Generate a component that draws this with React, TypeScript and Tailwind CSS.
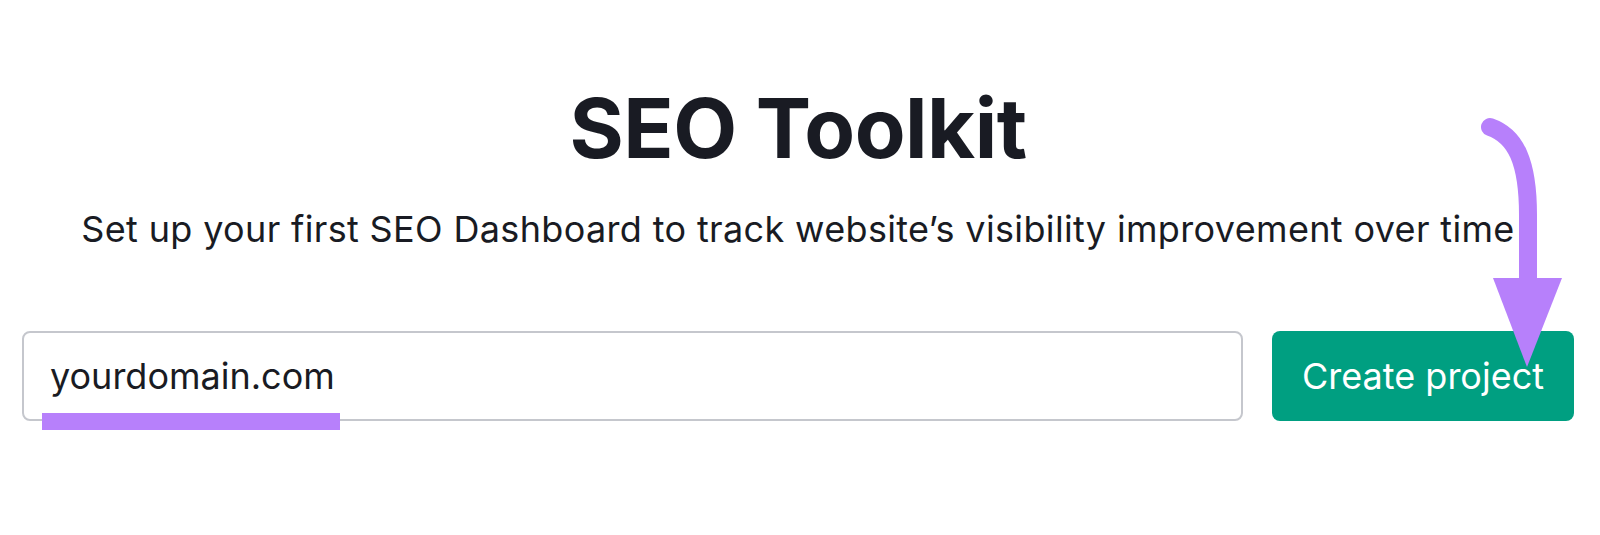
import React from 'react'

function Arrow() {
  return (
    <svg className="absolute left-[1470px] top-[110px] pointer-events-none" width="110" height="270" viewBox="0 0 110 270">
      <path d="M20 17 C46 26 58 52 58 105 L58 176" fill="none" stroke="#b780fb" strokeWidth="18" strokeLinecap="round" />
      <path d="M23 168 L92 168 L57 257 Z" fill="#b780fb" />
    </svg>
  )
}

export default function App() {
  return (
    <div className="relative w-[1600px] h-[535px] bg-white overflow-hidden" style={{ fontFamily: 'Inter, "Noto Sans", sans-serif' }}>
      <div className="ml-[22px] w-[1552px] flex flex-col items-center pt-[78px]">
        <h1 className="text-[83px] font-bold leading-[100px] text-[#191b23] tracking-[-0.5px]">SEO Toolkit</h1>
        <p className="mt-[29px] text-[36px] leading-[44px] text-[#191b23] tracking-[0.35px]">
          Set up your first SEO Dashboard to track website’s visibility improvement over time
        </p>
        <div className="mt-[80px] w-full flex gap-[29px]">
          <div className="relative flex-1 h-[90px] border-2 border-[#c5c7cd] rounded-[8px] flex items-center pl-[26px]">
            <span className="text-[36px] text-[#191b23]">yourdomain.com</span>
            <div className="absolute left-[18px] top-[80px] w-[298px] h-[17px] bg-[#b780fb]" />
          </div>
          <button className="w-[302px] h-[90px] rounded-[8px] bg-[#009f81] text-white text-[36px]">
            Create project
          </button>
        </div>
      </div>
      <Arrow />
    </div>
  )
}
